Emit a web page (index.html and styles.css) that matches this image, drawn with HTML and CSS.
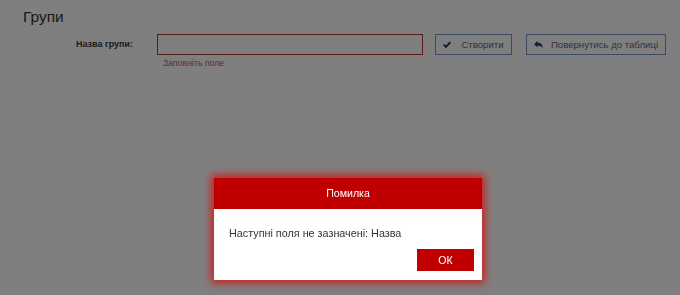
FILE: index.html
```html
<!DOCTYPE html>
<html lang="uk">

<head>
    <meta charset="UTF-8">
    <title>Групи</title>
    <link rel="stylesheet" href="styles.css">
</head>

<body>
    <div class="page">
        <h1 class="title">Групи</h1>
        <form class="group_form">
            <label class="field_label" for="name">Назва групи:</label>
            <div class="field">
                <input type="text" id="name" class="field_input">
                <div class="field_error">Заповніть поле</div>
            </div>
            <button type="button" class="btn btn_create">
                <svg class="icon" width="8" height="7" viewBox="0 0 8 7">
                    <path d="M0.6 3.6 L2.9 5.9 L7.4 1.2" fill="none" stroke="currentColor" stroke-width="1.9"/>
                </svg>
                Створити
            </button>
            <button type="button" class="btn btn_back">
                <svg class="icon" width="9" height="8" viewBox="0 0 9 8">
                    <path d="M0 3.2 L3.6 0 V1.8 C7 1.8 8.8 3.8 8.6 7.6 C7.8 5.4 6.2 4.6 3.6 4.6 V6.4 Z" fill="currentColor"/>
                </svg>
                Повернутись до таблиці
            </button>
        </form>
    </div>

    <div class="backdrop"></div>

    <div class="dialog">
        <div class="dialog_head">Помилка</div>
        <div class="dialog_body">
            <p class="dialog_text">Наступні поля не зазначені: Назва</p>
            <div class="dialog_foot">
                <button type="button" class="dialog_ok">ОК</button>
            </div>
        </div>
    </div>
</body>

</html>
```

FILE: styles.css
```css
* {
    box-sizing: border-box;
}

body {
    margin: 0;
    background-color: #fff;
    font-family: "Liberation Sans", Arial, sans-serif;
    color: #333;
}

.page {
    height: 295px;
    border-top: 1px solid #fff;
}

.title {
    margin: 0;
    padding: 6px 0 0 23px;
    font-size: 15.5px;
    font-weight: normal;
    line-height: 20px;
    color: #333;
}

.group_form {
    display: flex;
    align-items: flex-start;
    margin-top: 7px;
}

.field_label {
    width: 133px;
    margin-right: 24px;
    text-align: right;
    font-size: 9px;
    font-weight: bold;
    line-height: 21px;
    color: #3a3a3a;
}

.field {
    width: 266px;
}

.field_input {
    display: block;
    width: 100%;
    height: 21px;
    border: 1px solid #b83838;
    outline: none;
    background-color: #fff;
}

.field_error {
    margin-top: 3px;
    padding-left: 6px;
    font-size: 8.7px;
    line-height: 10px;
    color: #c05a5a;
}

.btn {
    display: flex;
    align-items: center;
    justify-content: center;
    height: 21px;
    padding: 0;
    border: 1px solid #7892c4;
    background-color: #fff;
    font-family: inherit;
    font-size: 9.6px;
    color: #56688c;
    white-space: nowrap;
}

.btn_create {
    width: 77px;
    margin-left: 12px;
    gap: 10px;
}

.btn_back {
    width: 140px;
    margin-left: 14px;
    gap: 8px;
}

.icon {
    display: block;
    color: #1e3a70;
}

.backdrop {
    position: fixed;
    inset: 0;
    background-color: rgba(0, 0, 0, 0.5);
}

.dialog {
    position: absolute;
    left: 214px;
    top: 178px;
    width: 268px;
    background-color: #fff;
    box-shadow: 0 0 8px 3px rgba(230, 0, 0, 0.75);
}

.dialog_head {
    height: 31px;
    background-color: #c00000;
    color: #fff;
    font-size: 10.6px;
    line-height: 31px;
    text-align: center;
}

.dialog_body {
    padding: 17px 8px 9px 15px;
}

.dialog_text {
    margin: 0 0 9px;
    font-size: 10.8px;
    line-height: 14px;
    color: #333;
}

.dialog_foot {
    display: flex;
    justify-content: flex-end;
}

.dialog_ok {
    width: 57px;
    height: 22px;
    border: none;
    background-color: #c00000;
    color: #fff;
    font-family: inherit;
    font-size: 10.6px;
}
```
